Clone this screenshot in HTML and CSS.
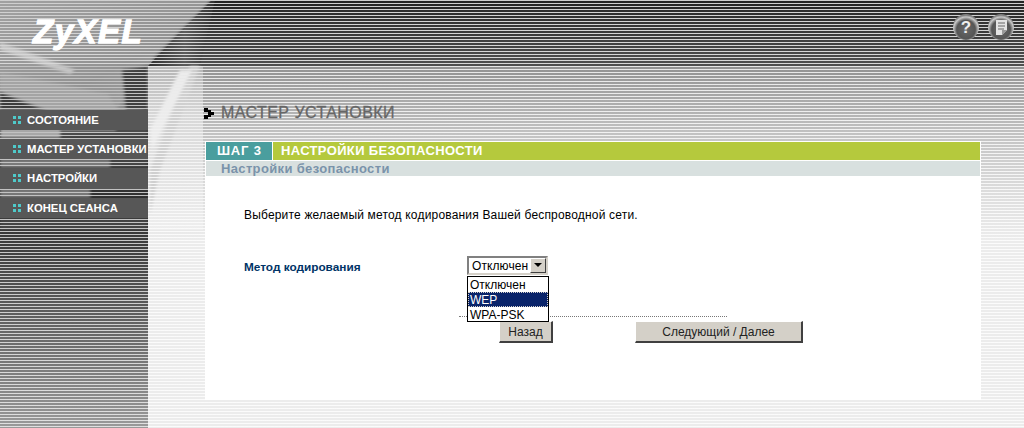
FILE: index.html
```html
<!DOCTYPE html>
<html lang="ru">
<head>
    <meta charset="UTF-8">
    <title>ZyXEL - Мастер установки</title>
    <link rel="stylesheet" href="styles.css">
</head>
<body>

<svg class="art" width="215" height="230" viewBox="0 0 215 230">
    <defs>
        <pattern id="rows" width="3" height="3" patternUnits="userSpaceOnUse">
            <rect y="1" width="3" height="2" fill="#fff"/>
        </pattern>
        <mask id="dark-rows" maskUnits="userSpaceOnUse" x="0" y="0" width="215" height="230">
            <rect width="215" height="230" fill="url(#rows)"/>
        </mask>
        <filter id="soft" x="-10%" y="-10%" width="120%" height="120%">
            <feGaussianBlur stdDeviation="1.6"/>
        </filter>
        <linearGradient id="top-face" x1="0" y1="0" x2="1" y2="1">
            <stop offset="0" stop-color="#a2a2a2"/>
            <stop offset="0.6" stop-color="#929292"/>
            <stop offset="1" stop-color="#a8a8a8"/>
        </linearGradient>
        <linearGradient id="wedge" x1="0" y1="0" x2="1" y2="0">
            <stop offset="0" stop-color="#2e2e2e"/>
            <stop offset="0.55" stop-color="#5c5c5c"/>
            <stop offset="1" stop-color="#333"/>
        </linearGradient>
        <linearGradient id="panel" x1="0" y1="0" x2="0" y2="1">
            <stop offset="0" stop-color="#b4b4b4"/>
            <stop offset="0.3" stop-color="#d8d8d8"/>
            <stop offset="1" stop-color="#eeeeee"/>
        </linearGradient>
    </defs>
    <g mask="url(#dark-rows)">
        <g filter="url(#soft)">
            <rect x="-6" y="-6" width="160" height="120" fill="#8a8a8a"/>
            <polygon points="-6,-6 218,-6 146,66 118,108 -6,92" fill="url(#top-face)"/>
            <polygon points="0,42 75,70 70,74 0,50" fill="#c8c8c8"/>
            <polygon points="0,72 108,94 118,110 0,110" fill="#a4a4a4"/>
            <polygon points="0,92 50,112 0,112" fill="#3c3c3c"/>
            <polygon points="122,70 148,66 148,112 126,112" fill="#404040"/>
        </g>
        <polygon points="212,0 215,0 200,66 148,66" fill="url(#wedge)"/>
        <g filter="url(#soft)">
            <rect x="0" y="110" width="148" height="28" fill="#a8a8a8"/>
            <path d="M60 130 L115 130 L128 114 L148 110 L148 138 L60 138 Z" fill="#4c4c4c"/>
            <rect y="159" width="148" height="9" fill="#7a7a7a"/>
            <rect x="110" y="159" width="38" height="9" fill="#444"/>
            <rect y="188" width="148" height="10" fill="#777"/>
            <rect x="90" y="188" width="58" height="10" fill="#333"/>
            <rect y="218" width="148" height="14" fill="#444"/>
        </g>
        <polygon points="148,66 203,66 203,230 148,230" fill="url(#panel)"/>
        <g filter="url(#soft)">
            <polygon points="190,66 200,66 160,170 150,214 150,170" fill="#cfcfcf"/>
            <polygon points="180,70 192,70 152,150 150,130" fill="#ececec"/>
        </g>
    </g>
</svg>

<header class="topbar">
    <div class="logo">ZyXEL</div>
    <div class="top-icons">
        <svg width="28" height="28" viewBox="0 0 28 28">
            <defs>
                <radialGradient id="ball" cx="0.5" cy="0.6" r="0.55">
                    <stop offset="0" stop-color="#6a6a6a"/>
                    <stop offset="0.65" stop-color="#555"/>
                    <stop offset="0.88" stop-color="#c8c8c8"/>
                    <stop offset="1" stop-color="#808080"/>
                </radialGradient>
            </defs>
            <circle cx="14" cy="14" r="13" fill="url(#ball)"/>
            <text class="help-mark" x="14" y="20" text-anchor="middle">?</text>
        </svg>
        <svg width="28" height="28" viewBox="0 0 28 28">
            <circle cx="14" cy="14" r="13" fill="url(#ball)"/>
            <path d="M9 7 H20 V17 L15 22 H9 Z" fill="#e4e4e4"/>
            <path d="M11 10 H18 M11 13 H18 M11 16 H17" stroke="#666" stroke-width="1"/>
            <path d="M15 22 V17 H20" fill="#999"/>
        </svg>
    </div>
</header>

<div class="layout">
    <aside class="sidebar">
        <nav class="menu">
            <a class="menu-item"><span class="dots"></span>СОСТОЯНИЕ</a>
            <a class="menu-item"><span class="dots"></span>МАСТЕР УСТАНОВКИ</a>
            <a class="menu-item"><span class="dots"></span>НАСТРОЙКИ</a>
            <a class="menu-item"><span class="dots"></span>КОНЕЦ СЕАНСА</a>
        </nav>
    </aside>

    <main class="content">
        <h1 class="page-title">
            <svg class="title-mark" width="11" height="11" viewBox="0 0 11 11">
                <path d="M0 0 H4 V2 H7 V4 H10 V7 H7 V9 H4 V11 H0 V7 H4 V4 H0 Z" fill="#000"/>
            </svg>
            МАСТЕР УСТАНОВКИ
        </h1>

        <section class="card">
            <div class="step-row">
                <div class="step-no">ШАГ 3</div>
                <div class="step-name">НАСТРОЙКИ БЕЗОПАСНОСТИ</div>
            </div>
            <div class="sub-row">Настройки безопасности</div>

            <div class="card-body">
                <p class="intro">Выберите желаемый метод кодирования Вашей беспроводной сети.</p>

                <div class="field">
                    <label class="field-label">Метод кодирования</label>
                    <div class="select">
                        <span class="select-value">Отключен</span>
                        <span class="select-arrow"></span>
                        <ul class="select-list">
                            <li>Отключен</li>
                            <li class="selected">WEP</li>
                            <li>WPA-PSK</li>
                        </ul>
                    </div>
                </div>

                <div class="divider"></div>

                <div class="buttons">
                    <button class="btn btn-back">Назад</button>
                    <button class="btn btn-next">Следующий / Далее</button>
                </div>
            </div>
        </section>
    </main>
</div>

</body>
</html>
```

FILE: styles.css
```css
html, body {
    margin: 0;
    height: 428px;
    overflow: hidden;
}
body {
    font-family: "Liberation Sans", Arial, sans-serif;
    font-size: 12px;
    background-color: #f2f2f2;
    background-image:
        repeating-linear-gradient(to bottom, rgba(255,255,255,.78) 0, rgba(255,255,255,.78) 1px, transparent 1px, transparent 3px),
        linear-gradient(to bottom, #242424 0, #505050 66px, #929292 66px, #c6c6c6 140px, #dcdcdc 190px, #ececec 240px, #ececec 428px);
    background-repeat: repeat, no-repeat;
    position: relative;
}
.art {
    position: absolute;
    top: 0;
    left: 0;
}
.topbar {
    position: relative;
    height: 66px;
    box-sizing: border-box;
    display: flex;
    justify-content: space-between;
    padding: 13px 9px 0 33px;
}
.logo {
    font-size: 33px;
    line-height: 38px;
    font-weight: bold;
    font-style: italic;
    color: #fff;
    letter-spacing: 1.5px;
    -webkit-text-stroke: 1.3px #fff;
}
.top-icons {
    display: flex;
    gap: 7px;
    height: 28px;
}
.help-mark {
    font-family: "Liberation Sans", Arial, sans-serif;
    font-size: 17px;
    font-weight: bold;
    fill: #eee;
}
.layout {
    display: flex;
    height: 362px;
}
.sidebar {
    width: 148px;
    flex: none;
    background-image:
        repeating-linear-gradient(to bottom, rgba(255,255,255,.7) 0, rgba(255,255,255,.7) 1px, transparent 1px, transparent 3px),
        linear-gradient(to bottom, #333 154px, #555 230px, #9a9a9a 362px);
    background-repeat: repeat, no-repeat;
}
.menu {
    position: relative;
    display: flex;
    flex-direction: column;
    gap: 9px;
    padding-top: 44px;
}
.menu-item {
    height: 20.2px;
    display: flex;
    align-items: center;
    background: #575757;
    color: #fff;
    font-size: 11.3px;
    font-weight: bold;
    white-space: nowrap;
    padding-left: 13px;
}
.dots {
    width: 8px;
    height: 8px;
    margin-right: 6px;
    flex: none;
    background:
        linear-gradient(#4fcaca, #4fcaca) 0 0 / 3px 3px no-repeat,
        linear-gradient(#4fcaca, #4fcaca) 5px 0 / 3px 3px no-repeat,
        linear-gradient(#4fcaca, #4fcaca) 0 5px / 3px 3px no-repeat,
        linear-gradient(#4fcaca, #4fcaca) 5px 5px / 3px 3px no-repeat;
}
.content {
    position: relative;
    flex: 1;
    padding: 38px 43px 0 57px;
    box-sizing: border-box;
}
.page-title {
    margin: 0 0 19px -1px;
    height: 18px;
    display: flex;
    align-items: center;
    gap: 6px;
    font-size: 16px;
    font-weight: normal;
    color: #666;
    letter-spacing: 0.45px;
    -webkit-text-stroke: 0.3px #666;
}
.card {
    background: #fff;
    height: 259px;
    width: 776px;
    box-sizing: border-box;
    padding: 1px 1px 0 1px;
}
.step-row {
    display: flex;
    gap: 1px;
    height: 18px;
    color: #fff;
    font-size: 13px;
    font-weight: bold;
    line-height: 18px;
}
.step-no {
    width: 66px;
    box-sizing: border-box;
    padding-left: 11px;
    letter-spacing: 0.8px;
    background: #4a9e9e;
}
.step-name {
    flex: 1;
    padding-left: 8px;
    letter-spacing: 0.35px;
    background: #b5c93d;
}
.sub-row {
    margin-top: 1px;
    height: 15px;
    line-height: 15px;
    padding-left: 15px;
    background: #d8e0df;
    color: #7a93aa;
    font-size: 13px;
    font-weight: bold;
    letter-spacing: 0.35px;
}
.card-body {
    padding-top: 32px;
}
.intro {
    margin: 0 0 34px 38px;
    height: 14px;
    line-height: 14px;
    color: #000;
    letter-spacing: 0.18px;
}
.field {
    display: flex;
    align-items: center;
    height: 19px;
    padding-left: 38px;
}
.field-label {
    width: 223px;
    font-weight: bold;
    color: #003366;
    padding-top: 2px;
    font-size: 11.8px;
}
.select {
    position: relative;
    width: 81px;
    height: 19px;
    box-sizing: border-box;
    display: flex;
    align-items: center;
    justify-content: space-between;
    background: #fff;
    border: 2px solid #808080;
    border-right-color: #d4d0c8;
    border-bottom-color: #d4d0c8;
}
.select-value {
    padding-left: 3px;
    color: #000;
    letter-spacing: 0.1px;
}
.select-arrow {
    width: 16px;
    height: 15px;
    box-sizing: border-box;
    background: #d4d0c8;
    border: 1px solid #fff;
    border-right-color: #404040;
    border-bottom-color: #404040;
    position: relative;
}
.select-arrow::after {
    content: "";
    position: absolute;
    left: 3px;
    top: 4px;
    border-style: solid;
    border-width: 4px 4px 0 4px;
    border-color: #000 transparent transparent transparent;
}
.select-list {
    position: absolute;
    top: 18px;
    left: -2px;
    width: 82px;
    height: 46px;
    box-sizing: border-box;
    margin: 0;
    padding: 0;
    list-style: none;
    background: #fff;
    border: 1px solid #000;
    z-index: 2;
}
.select-list li {
    height: 15px;
    line-height: 16px;
    padding-left: 2px;
    box-sizing: border-box;
    color: #000;
}
.select-list li.selected {
    background: #0a246a;
    color: #fff;
    outline: 1px dotted #d4d0c8;
    outline-offset: -1px;
}
.divider {
    margin: 41px 0 0 253px;
    width: 268px;
    border-top: 1px dotted #777;
}
.buttons {
    display: flex;
    gap: 82px;
    margin-top: 4px;
    padding-left: 293px;
}
.btn {
    height: 22px;
    padding: 0;
    font-family: inherit;
    font-size: 12px;
    color: #222;
    background: #d4d0c8;
    border: 1px solid #fff;
    border-right: 2px solid #404040;
    border-bottom: 2px solid #404040;
    box-sizing: border-box;
}
.btn-back {
    width: 54px;
}
.btn-next {
    width: 168px;
}
```
